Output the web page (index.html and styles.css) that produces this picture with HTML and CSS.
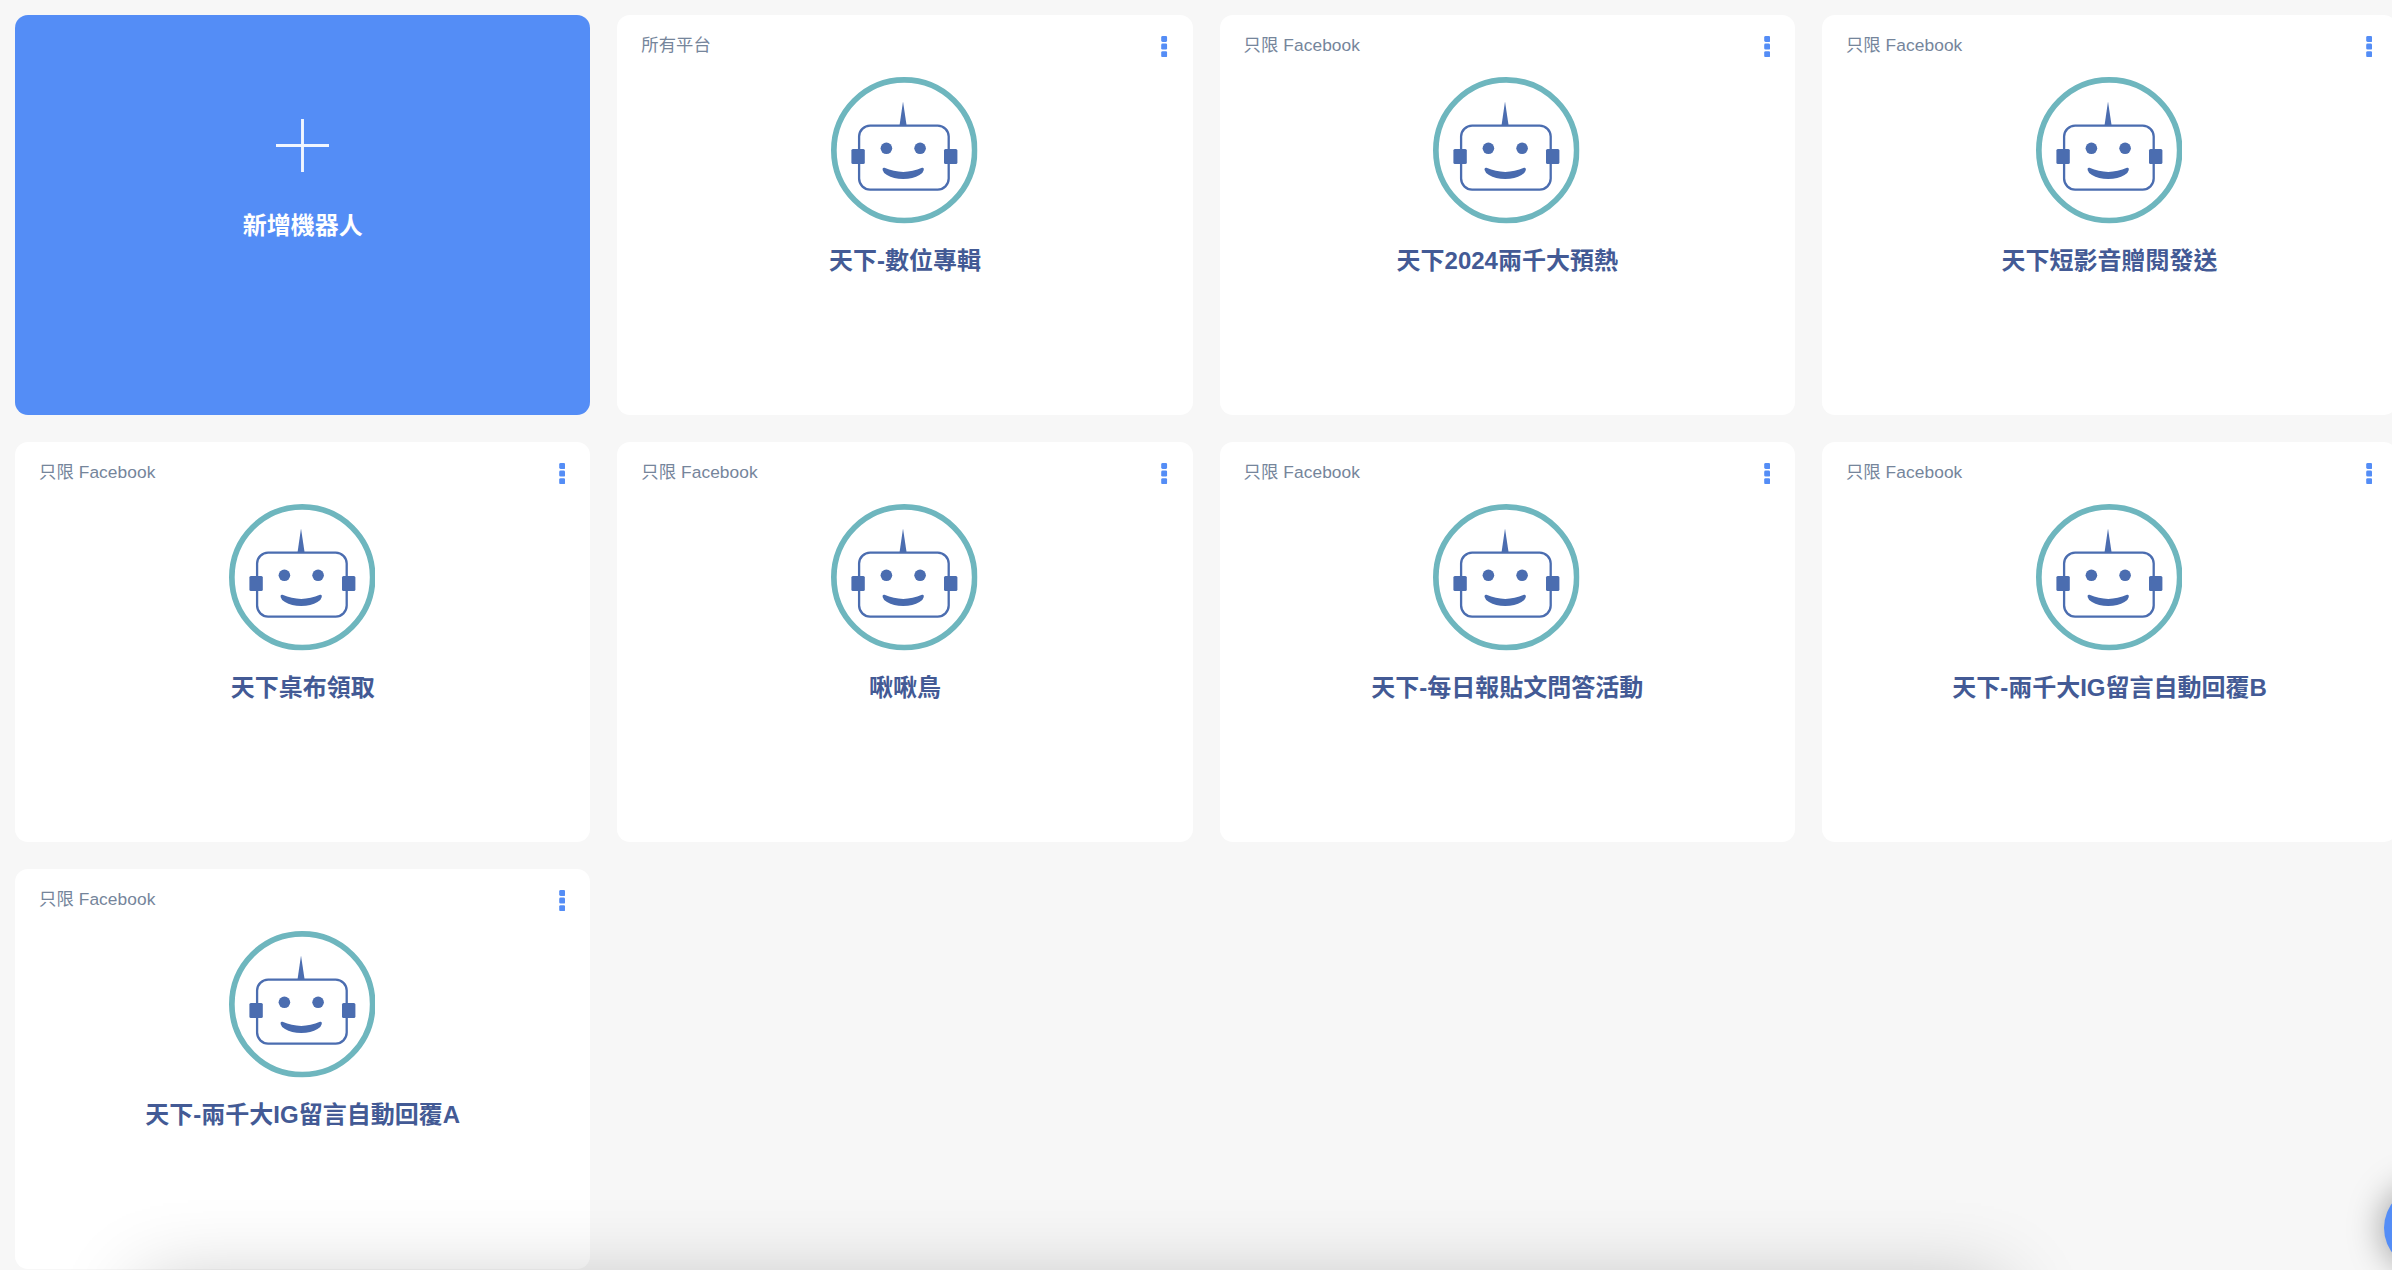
FILE: index.html
```html
<!DOCTYPE html>
<html lang="zh-Hant">
<head>
    <meta charset="UTF-8">
    <meta name="viewport" content="width=device-width, initial-scale=1.0">
    <title>機器人</title>
    <link rel="stylesheet" href="styles.css">
</head>
<body>

    <svg class="sprite">
        <symbol id="robot" viewBox="0 0 146.5 146.5">
            <circle cx="73.25" cy="73.25" r="70.4" fill="#fff" stroke="#6eb6be" stroke-width="5.7"/>
            <rect x="28.1" y="48.6" width="89.6" height="64" rx="11" fill="none" stroke="#4b6db0" stroke-width="2.3"/>
            <path d="M72 24.5 L75.6 48.5 H68.5 Z" fill="#4b6db0"/>
            <rect x="20.4" y="72" width="13.4" height="15" rx="1.5" fill="#4b6db0"/>
            <rect x="113" y="72" width="13.4" height="15" rx="1.5" fill="#4b6db0"/>
            <circle cx="55.4" cy="71.3" r="5.8" fill="#4b6db0"/>
            <circle cx="89.1" cy="71.3" r="5.8" fill="#4b6db0"/>
            <path d="M53.5 90.8 Q72.2 99 91 90.8 Q93.2 90.2 92.8 93 Q92.4 95.6 88.5 98 Q82 101.9 72.2 101.9 Q62.4 101.9 56 98 Q52 95.6 51.6 93 Q51.2 90.2 53.5 90.8 Z" fill="#486aae"/>
        </symbol>
        <symbol id="dots" viewBox="0 0 6.4 21.2">
            <rect x="0.2" y="0" width="6" height="6" rx="1.4" fill="#548df6"/>
            <rect x="0.2" y="7.6" width="6" height="6" rx="1.4" fill="#548df6"/>
            <rect x="0.2" y="15.2" width="6" height="6" rx="1.4" fill="#548df6"/>
        </symbol>
    </svg>

    <main class="bot-list">
        <div class="card card-add">
            <svg class="plus" viewBox="0 0 53 53">
                <path d="M26.5 0 V53 M0 26.5 H53" stroke="#fff" stroke-width="2.9" stroke-opacity="0.92"/>
            </svg>
            <h2 class="add-title">新增機器人</h2>
        </div>

        <div class="card">
            <div class="card-header">
                <span class="platform">所有平台</span>
                <svg class="menu"><use href="#dots"/></svg>
            </div>
            <svg class="avatar"><use href="#robot"/></svg>
            <h2 class="bot-name">天下-數位專輯</h2>
        </div>

        <div class="card">
            <div class="card-header">
                <span class="platform">只限 Facebook</span>
                <svg class="menu"><use href="#dots"/></svg>
            </div>
            <svg class="avatar"><use href="#robot"/></svg>
            <h2 class="bot-name">天下2024兩千大預熱</h2>
        </div>

        <div class="card">
            <div class="card-header">
                <span class="platform">只限 Facebook</span>
                <svg class="menu"><use href="#dots"/></svg>
            </div>
            <svg class="avatar"><use href="#robot"/></svg>
            <h2 class="bot-name">天下短影音贈閱發送</h2>
        </div>

        <div class="card">
            <div class="card-header">
                <span class="platform">只限 Facebook</span>
                <svg class="menu"><use href="#dots"/></svg>
            </div>
            <svg class="avatar"><use href="#robot"/></svg>
            <h2 class="bot-name">天下桌布領取</h2>
        </div>

        <div class="card">
            <div class="card-header">
                <span class="platform">只限 Facebook</span>
                <svg class="menu"><use href="#dots"/></svg>
            </div>
            <svg class="avatar"><use href="#robot"/></svg>
            <h2 class="bot-name">啾啾鳥</h2>
        </div>

        <div class="card">
            <div class="card-header">
                <span class="platform">只限 Facebook</span>
                <svg class="menu"><use href="#dots"/></svg>
            </div>
            <svg class="avatar"><use href="#robot"/></svg>
            <h2 class="bot-name">天下-每日報貼文問答活動</h2>
        </div>

        <div class="card">
            <div class="card-header">
                <span class="platform">只限 Facebook</span>
                <svg class="menu"><use href="#dots"/></svg>
            </div>
            <svg class="avatar"><use href="#robot"/></svg>
            <h2 class="bot-name">天下-兩千大IG留言自動回覆B</h2>
        </div>

        <div class="card">
            <div class="card-header">
                <span class="platform">只限 Facebook</span>
                <svg class="menu"><use href="#dots"/></svg>
            </div>
            <svg class="avatar"><use href="#robot"/></svg>
            <h2 class="bot-name">天下-兩千大IG留言自動回覆A</h2>
        </div>
    </main>

    <div class="bottom-shadow"></div>
    <div class="chat-button"></div>

</body>
</html>
```
FILE: styles.css
```css
* {
    box-sizing: border-box;
}

body {
    font-family: "Liberation Sans", "Noto Sans CJK TC", sans-serif;
    margin: 0;
    height: 100vh;
    overflow: hidden;
    background-color: #f7f7f7;
}

.sprite {
    display: none;
}

.bot-list {
    display: grid;
    grid-template-columns: repeat(4, 575.3px);
    grid-auto-rows: 400px;
    gap: 27px;
    padding: 15px;
}

.card {
    display: flex;
    flex-direction: column;
    align-items: center;
    background-color: #fff;
    border-radius: 13px;
}

.card-add {
    background-color: #548df6;
    padding-top: 104px;
}

.plus {
    width: 53px;
    height: 53px;
}

.add-title {
    margin: 36px 0 0;
    font-size: 24px;
    line-height: 36px;
    color: #fff;
}

.card-header {
    display: flex;
    justify-content: space-between;
    width: 100%;
    height: 62px;
    padding: 17px 25px 0 24px;
}

.platform {
    font-size: 17.33px;
    line-height: 26px;
    letter-spacing: 0.08px;
    color: #75859b;
}

.menu {
    width: 6.4px;
    height: 21.2px;
    margin-top: 4px;
}

.avatar {
    width: 146.5px;
    height: 146.5px;
    flex-shrink: 0;
    margin-right: 1px;
}

.bot-name {
    margin: 19.5px 0 0;
    font-size: 24px;
    line-height: 36px;
    color: #435a95;
}

.bottom-shadow {
    position: fixed;
    top: 1285px;
    left: 142px;
    width: 1860px;
    height: 300px;
    box-shadow: 0 0 78px rgba(0, 0, 0, 0.24);
}

.chat-button {
    position: fixed;
    top: 1186px;
    left: 2384px;
    width: 84px;
    height: 84px;
    border-radius: 50%;
    background-color: #548df6;
    box-shadow: 0 0 36px rgba(0, 0, 0, 0.4);
}
```
